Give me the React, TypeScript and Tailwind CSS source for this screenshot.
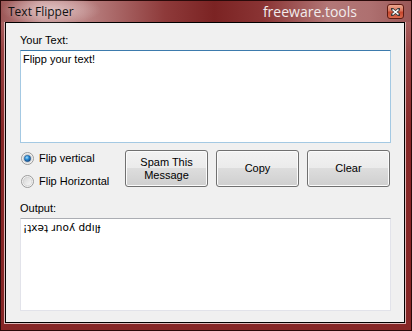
import React from "react";

const ui = "font-['Liberation_Sans',Arial,sans-serif] text-[11px] leading-[13px] text-black";

function Radio({ checked, label, id }: { checked: boolean; label: string; id: string }) {
  return (
    <div className="flex h-[13px] items-center gap-[5px] pl-[1px]">
      <svg width="13" height="13" viewBox="0 0 13 13">
        <defs>
          <linearGradient id={`rf-${id}`} x1="0" y1="0" x2="1" y2="1">
            <stop offset="0" stopColor="#d4d4d4" />
            <stop offset="1" stopColor="#fafafa" />
          </linearGradient>
          <radialGradient id={`dot-${id}`} cx="0.4" cy="0.35" r="0.7">
            <stop offset="0" stopColor="#a6e0fa" />
            <stop offset="0.45" stopColor="#2b8cd6" />
            <stop offset="1" stopColor="#0d3f78" />
          </radialGradient>
        </defs>
        <circle cx="6.5" cy="6.5" r="6" fill="#f4f4f4" stroke="#9a9a9a" />
        <circle cx="6.5" cy="6.5" r="4.3" fill={`url(#rf-${id})`} stroke="#c8c8c8" strokeWidth="0.6" />
        {checked && <circle cx="6.5" cy="6.5" r="3.2" fill={`url(#dot-${id})`} stroke="#1c4f86" strokeWidth="0.5" />}
      </svg>
      <span>{label}</span>
    </div>
  );
}

function Btn({ children }: { children: React.ReactNode }) {
  return (
    <button className="flex h-[37px] w-[83px] items-center justify-center rounded-[3px] border border-[#707070] bg-[linear-gradient(to_bottom,#f2f2f2_0%,#ebebeb_50%,#dddddd_50%,#cfcfcf_100%)] text-center leading-[13px] shadow-[inset_0_0_0_1px_#fbfbfb]">
      {children}
    </button>
  );
}

export default function App() {
  return (
    <div className="flex h-[331px] w-[412px] flex-col border border-[#2a0a0a] bg-[linear-gradient(to_bottom,#b27474_0%,#9a4444_15%,#872828_40%,#862626_100%)]">
      {/* title bar */}
      <div className="relative flex h-[21px] shrink-0 items-center bg-[linear-gradient(to_right,#9c5757_0%,#c49292_10%,#bb8484_20%,#8e3a3a_40%,#7b2323_52%,#8a3434_64%,#b27777_80%,#ae7070_90%,#9a5858_100%)]">
        <div className="pointer-events-none absolute left-[0px] top-[-6px] h-[30px] w-[100px] rounded-full bg-[radial-gradient(closest-side,rgba(235,215,215,0.7),rgba(235,215,215,0))]" />
        <span className="relative pl-[7px] font-['Open_Sans',sans-serif] text-[12px] leading-[16px] text-[#111]">
          Text Flipper
        </span>
        <span className="ml-auto mr-[30px] font-['Open_Sans',sans-serif] text-[14px] leading-[18px] text-[#f2ecec]">
          freeware.tools
        </span>
        <div className="mr-[7px] flex h-[15px] w-[17px] items-center justify-center rounded-[3px] border border-[#5e1a12] bg-[linear-gradient(to_bottom,#eaa890_0%,#d9735a_45%,#c6442c_55%,#d86a4e_100%)]">
          <svg width="9" height="8" viewBox="0 0 9 8">
            <path d="M1 1 L8 7 M8 1 L1 7" stroke="#3a3a3a" strokeWidth="3" strokeLinecap="square" />
            <path d="M1.5 1.5 L7.5 6.5 M7.5 1.5 L1.5 6.5" stroke="#ffffff" strokeWidth="1.6" />
          </svg>
        </div>
      </div>

      {/* client area */}
      <div className="ml-[3px] mr-[5px] border-x border-b border-[#dcb6b6]">
        <div className={`${ui} flex h-[301px] flex-col border border-black bg-[#f0f0f0] pl-[14px] pr-[13px] pt-[11px]`}>
          <div>Your Text:</div>
          <div className="mt-[3px] h-[93px] w-[371px] border border-[#a4c9e3] border-t-[#3d7bad] bg-white pl-[2px] pt-[2px]">
            Flipp your text!
          </div>

          <div className="mt-[7px] flex h-[37px]">
            <div className="flex w-[105px] flex-col gap-[10px] pt-[2px]">
              <Radio checked id="v" label="Flip vertical" />
              <Radio checked={false} id="h" label="Flip Horizontal" />
            </div>
            <div className="flex gap-[8px]">
              <Btn>
                Spam This
                <br />
                Message
              </Btn>
              <Btn>Copy</Btn>
              <Btn>Clear</Btn>
            </div>
          </div>

          <div className="mt-[15px]">Output:</div>
          <div className="mt-[3px] h-[93px] w-[371px] border border-[#e2e3ea] border-t-[#abadb3] bg-white pl-[2px] pt-[2px] font-['DejaVu_Sans',sans-serif] text-[10.5px]">
            ¡ʇxǝʇ ɹnoʎ ddıןɟ
          </div>
        </div>
      </div>
    </div>
  );
}
